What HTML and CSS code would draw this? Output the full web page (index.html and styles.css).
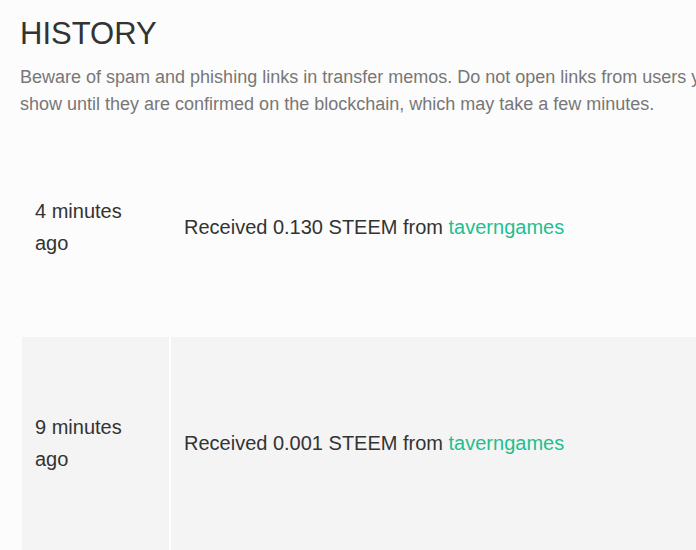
FILE: index.html
```html
<!DOCTYPE html>
<html>
	<head>
		<meta charset="UTF-8">
		<title>History</title>
		<link rel="stylesheet" href="styles.css">
	</head>
	<body>
		<div class="wallet">
			<h1 class="title">HISTORY</h1>
			<p class="notice">Beware of spam and phishing links in transfer memos. Do not open links from users you do not trust. Do not provide your private keys to any third party websites. Transactions will not<br>show until they are confirmed on the blockchain, which may take a few minutes.</p>
			<table class="history">
				<tr>
					<td class="time">4 minutes ago</td>
					<td class="op">Received 0.130 STEEM from <a href="#">taverngames</a></td>
				</tr>
				<tr>
					<td class="time">9 minutes ago</td>
					<td class="op">Received 0.001 STEEM from <a href="#">taverngames</a></td>
				</tr>
			</table>
		</div>
	</body>
</html>
```
FILE: styles.css
```css
html, body{
	margin: 0;
	background-color: #fcfcfc;
	overflow: hidden;
}
body{
	font-family: "Liberation Sans", Arial, sans-serif;
	color: #333;
}
.wallet{
	width: 1400px;
	padding: 15px 20px 0;
}
.title{
	margin: 0;
	font-size: 31px;
	font-weight: normal;
	line-height: 1.2;
	color: #333;
}
.notice{
	margin: 12px 0 0;
	font-size: 18px;
	line-height: 27px;
	color: #777;
	white-space: nowrap;
}
.history{
	margin: 3px 0 0 2px;
	width: 1200px;
	border-collapse: collapse;
	font-size: 20px;
	line-height: 32px;
}
.history td{
	padding: 74px 13px 78px;
	vertical-align: middle;
	border-left: 2px solid transparent;
}
.history .time{
	width: 121px;
	border-left: 0;
}
.history tr:nth-child(even) td{
	background-color: #f4f4f4;
}
.history tr:nth-child(even) .op{
	border-left-color: #fff;
}
.history a{
	color: #1fbf8f;
	text-decoration: none;
}
```
